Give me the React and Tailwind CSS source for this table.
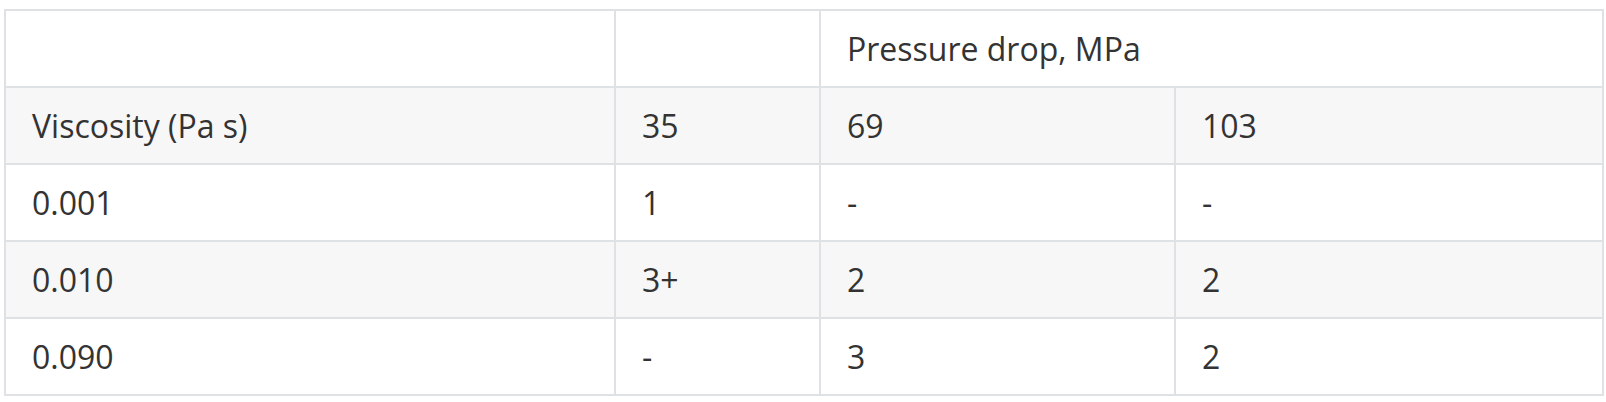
import React from "react";

const rows = [
  { bg: "bg-[#f7f7f7]", cells: ["Viscosity (Pa s)", "35", "69", "103"] },
  { bg: "bg-white", cells: ["0.001", "1", "-", "-"] },
  { bg: "bg-[#f7f7f7]", cells: ["0.010", "3+", "2", "2"] },
  { bg: "bg-white", cells: ["0.090", "-", "3", "2"] },
];

const cell = "border-r-2 border-b-2 border-[#dfe2e5] pl-[26px] pr-[20px] py-[15px] leading-[45px] h-[77px] whitespace-nowrap";

export default function App() {
  return (
    <div className="w-[1606px] h-[402px] bg-white pt-[9px] pl-[4px]" style={{ fontFamily: '"Open Sans", sans-serif' }}>
      <div className="grid grid-cols-[610px_205px_355px_428px] w-[1600px] border-l-2 border-t-2 border-[#dfe2e5] text-[32px] text-[#333333]">
        <div className={`${cell} bg-white`}></div>
        <div className={`${cell} bg-white`}></div>
        <div className={`${cell} bg-white col-span-2`}>Pressure drop, MPa</div>
        {rows.map((r, i) =>
          r.cells.map((c, j) => (
            <div key={`${i}-${j}`} className={`${cell} ${r.bg}`}>
              {c}
            </div>
          ))
        )}
      </div>
    </div>
  );
}
